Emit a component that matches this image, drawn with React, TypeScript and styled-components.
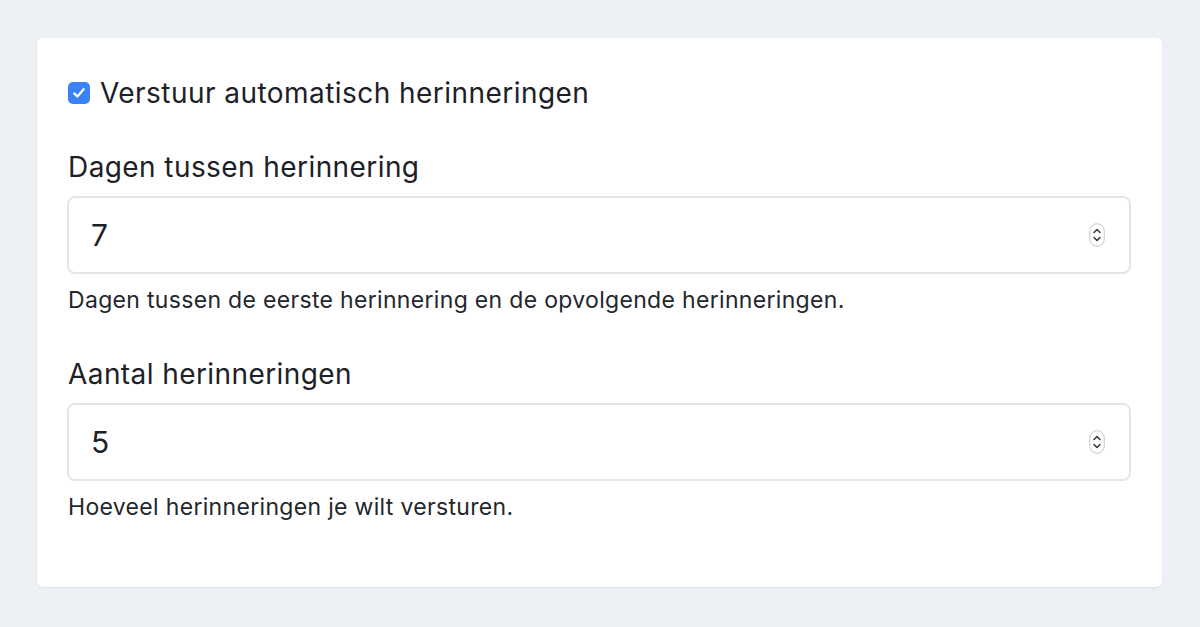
import React from 'react'
import styled, { createGlobalStyle } from 'styled-components'

const GlobalStyle = createGlobalStyle`
  html, body {
    margin: 0;
    padding: 0;
    background: #edf1f5;
    font-family: Inter, "Noto Sans", sans-serif;
    color: #1d2127;
  }
`

const Page = styled.div`
  padding: 38px 38px 40px 37px;
`

const Card = styled.div`
  background: #fff;
  border-radius: 6px;
  box-shadow: 0 1px 2px rgba(20, 40, 70, 0.08);
  padding: 37px 31px 66px 30px;
  display: flex;
  flex-direction: column;
  gap: 42px;
`

const CheckRow = styled.label`
  display: flex;
  align-items: center;
  gap: 10px;
  font-size: 28px;
  line-height: 36px;
  letter-spacing: 0.45px;
  margin-bottom: -4px;
`

const CheckBox = styled.span`
  width: 22px;
  height: 22px;
  margin-left: 1px;
  border-radius: 5px;
  background: #3b82f6;
  display: inline-flex;
  align-items: center;
  justify-content: center;
  flex: none;
`

const Field = styled.div`
  display: flex;
  flex-direction: column;
`

const Label = styled.div`
  font-size: 28px;
  line-height: 36px;
  letter-spacing: 0.42px;
  margin-bottom: 11px;
  padding-left: 1px;
`

const InputBox = styled.div`
  display: flex;
  align-items: center;
  height: 78px;
  box-sizing: border-box;
  border: 2px solid #e2e6eb;
  border-radius: 8px;
  padding: 0 24px 0 22px;
  font-size: 30px;
`

const Value = styled.span`
  flex: 1;
`

const Help = styled.div`
  margin-top: 12px;
  padding-left: 1px;
  font-size: 23px;
  line-height: 28px;
  letter-spacing: 0.32px;
  color: #23272d;
`

function Spinner() {
  return (
    <svg width="16" height="24" viewBox="0 0 16 24">
      <rect x="0.75" y="0.75" width="14.5" height="22.5" rx="7.25" fill="#fff" stroke="#c3c8cf" strokeWidth="1" />
      <path d="M5 9.5 L8 6.5 L11 9.5" fill="none" stroke="#3a3d42" strokeWidth="1.6" strokeLinecap="round" strokeLinejoin="round" />
      <path d="M5 14.5 L8 17.5 L11 14.5" fill="none" stroke="#3a3d42" strokeWidth="1.6" strokeLinecap="round" strokeLinejoin="round" />
    </svg>
  )
}

function NumberField({ label, value, help }: { label: string; value: number; help: string }) {
  return (
    <Field>
      <Label>{label}</Label>
      <InputBox>
        <Value>{value}</Value>
        <Spinner />
      </InputBox>
      <Help>{help}</Help>
    </Field>
  )
}

export default function App() {
  return (
    <>
      <GlobalStyle />
      <Page>
        <Card>
          <CheckRow>
            <CheckBox>
              <svg width="16" height="16" viewBox="0 0 16 16">
                <path d="M3.2 8.4 L6.4 11.5 L12.6 4.2" fill="none" stroke="#fff" strokeWidth="2.2" strokeLinecap="round" strokeLinejoin="round" />
              </svg>
            </CheckBox>
            Verstuur automatisch herinneringen
          </CheckRow>
          <NumberField
            label="Dagen tussen herinnering"
            value={7}
            help="Dagen tussen de eerste herinnering en de opvolgende herinneringen."
          />
          <NumberField label="Aantal herinneringen" value={5} help="Hoeveel herinneringen je wilt versturen." />
        </Card>
      </Page>
    </>
  )
}
